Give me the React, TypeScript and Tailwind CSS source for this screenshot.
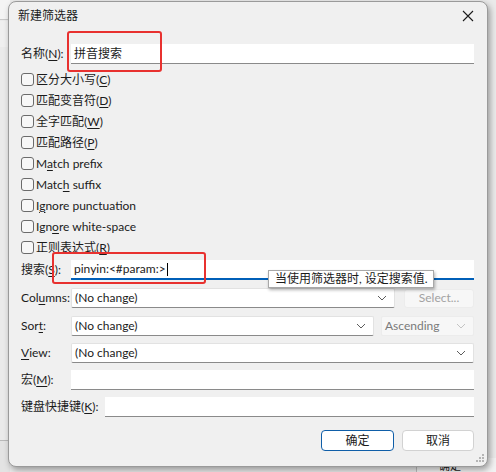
import React, { FC, ReactNode } from "react";

const font = "font-['Lato','Noto_Sans_CJK_SC',sans-serif]";

const U: FC<{ children: ReactNode }> = ({ children }) => (
  <span className="underline underline-offset-2 decoration-1">{children}</span>
);

const Chevron: FC<{ light?: boolean }> = ({ light }) => (
  <svg width="10" height="6" viewBox="0 0 10 6" className="shrink-0">
    <path
      d="M1 1 L5 5 L9 1"
      fill="none"
      stroke={light ? "#c4c4c4" : "#5c5c5c"}
      strokeWidth="1"
    />
  </svg>
);

const Check: FC<{ children: ReactNode }> = ({ children }) => (
  <label className="flex h-[21px] items-center gap-[2px] pl-[12px]">
    <span className="h-[13px] w-[13px] rounded-[3px] border border-[#6b6b6b] bg-[#f7f7f7]" />
    <span className="leading-none">{children}</span>
  </label>
);

const TextBox: FC<{ value?: ReactNode; className?: string; focused?: boolean }> = ({
  value,
  className = "",
  focused,
}) => (
  <div
    className={`flex h-[20px] items-center bg-white pl-[3px] border-b ${
      focused ? "border-b-2 border-[#005fb8]" : "border-[#8a8a8a]"
    } ${className}`}
  >
    {value}
  </div>
);

const Combo: FC<{ value: string; className?: string; disabled?: boolean }> = ({
  value,
  className = "",
  disabled,
}) => (
  <div
    className={`flex h-[20px] items-center justify-between rounded-[2px] border pl-[3px] pr-[7px] ${
      disabled
        ? "border-[#ececec] bg-[#f7f7f7] text-[#7a7a7a]"
        : "border-[#e2e2e2] border-b-[#8a8a8a] bg-white"
    } ${className}`}
  >
    <span>{value}</span>
    <Chevron light={disabled} />
  </div>
);

const Row: FC<{ label: ReactNode; children: ReactNode; mt: string; labelW?: string }> = ({
  label,
  children,
  mt,
  labelW = "w-[50px]",
}) => (
  <div className={`flex items-center pl-[12px] pr-[13px] ${mt}`}>
    <span className={`${labelW} shrink-0 whitespace-nowrap`}>{label}</span>
    <div className="flex flex-1 items-center">{children}</div>
  </div>
);

const App: FC = () => {
  return (
    <div className={`relative h-[472px] w-[496px] overflow-hidden bg-[#eaeaea] text-[12px] text-[#1b1b1b] ${font}`}>
      {/* desktop behind the dialog */}
      <div className="absolute left-0 top-0 h-[20px] w-[10px] border-b border-[#c9c9c9] bg-[#f4f4f4]" />
      <div className="absolute left-0 top-[21px] h-[26px] w-[10px] bg-[#efefef]" />
      <div className="absolute left-0 top-[440px] h-[32px] w-[10px] border-t border-[#b9b9b9] bg-[#e3e3e3]" />
      <div className="absolute left-[416px] top-[458px] h-[16px] w-[80px] border-l border-[#bdbdbd] bg-[#f2f2f2] pl-[22px] text-[11px] leading-[16px]">
        确定
      </div>

      {/* dialog window */}
      <div className="absolute left-[8px] top-[1px] flex h-[466px] w-[480px] flex-col rounded-[8px] border border-[#9a9a9a] bg-[#f0f0f0] shadow-[2px_3px_6px_rgba(0,0,0,0.35)]">
        <div className="flex h-[28px] items-center justify-between pl-[9px] pr-[13px]">
          <span>新建筛选器</span>
          <svg width="12" height="12" viewBox="0 0 12 12">
            <path d="M1 1 L11 11 M11 1 L1 11" stroke="#1b1b1b" strokeWidth="1.1" />
          </svg>
        </div>

        <Row label={<>名称(<U>N</U>):</>} mt="mt-[14px]">
          <TextBox value="拼音搜索" className="flex-1" />
        </Row>

        <div className="mt-[5px] flex flex-col">
          <Check>区分大小写(<U>C</U>)</Check>
          <Check>匹配变音符(<U>D</U>)</Check>
          <Check>全字匹配(<U>W</U>)</Check>
          <Check>匹配路径(<U>P</U>)</Check>
          <Check>M<U>a</U>tch prefix</Check>
          <Check>Matc<U>h</U> suffix</Check>
          <Check>I<U>g</U>nore punctuation</Check>
          <Check>Ign<U>o</U>re white-space</Check>
          <Check>正则表达式(<U>R</U>)</Check>
        </div>

        <Row label={<>搜索(<U>S</U>):</>} mt="mt-[2px]">
          <TextBox
            focused
            className="flex-1"
            value={
              <span className="flex items-center">
                pinyin:&lt;#param:&gt;<span className="ml-[1px] h-[13px] w-px bg-black" />
              </span>
            }
          />
        </Row>

        <Row label={<>Col<U>u</U>mns:</>} mt="mt-[8px]">
          <Combo value="(No change)" className="w-[324px]" />
          <div className="ml-[9px] flex h-[19px] flex-1 items-center justify-center rounded-[3px] border border-[#ececec] bg-[#f7f7f7] text-[#a2a2a2]">
            Select...
          </div>
        </Row>

        <Row label={<>Sor<U>t</U>:</>} mt="mt-[8px]">
          <Combo value="(No change)" className="w-[303px]" />
          <Combo value="Ascending" disabled className="ml-[7px] flex-1" />
        </Row>

        <Row label={<><U>V</U>iew:</>} mt="mt-[7px]">
          <Combo value="(No change)" className="flex-1" />
        </Row>

        <Row label={<>宏(<U>M</U>):</>} mt="mt-[7px]">
          <TextBox className="flex-1" />
        </Row>

        <Row label={<>键盘快捷键(<U>K</U>):</>} mt="mt-[7px]" labelW="w-[84px]">
          <TextBox className="flex-1" />
        </Row>

        <div className="mt-[13px] flex justify-end gap-[8px] pr-[13px]">
          <button className="flex h-[21px] w-[73px] items-center justify-center rounded-[4px] border border-[#0f5ea8] bg-white">
            确定
          </button>
          <button className="flex h-[21px] w-[72px] items-center justify-center rounded-[4px] border border-[#d2d2d2] bg-white">
            取消
          </button>
        </div>

        {/* size grip */}
        <svg width="8" height="8" viewBox="0 0 8 8" className="absolute bottom-[4px] right-[3px]">
          <rect x="6" y="0" width="2" height="2" fill="#b5b5b5" />
          <rect x="3" y="3" width="2" height="2" fill="#b5b5b5" />
          <rect x="6" y="3" width="2" height="2" fill="#b5b5b5" />
          <rect x="0" y="6" width="2" height="2" fill="#b5b5b5" />
          <rect x="3" y="6" width="2" height="2" fill="#b5b5b5" />
          <rect x="6" y="6" width="2" height="2" fill="#b5b5b5" />
        </svg>
      </div>

      {/* annotation boxes */}
      <div className="absolute left-[67px] top-[31px] h-[41px] w-[95px] rounded-[3px] border-2 border-[#e8312f]" />
      <div className="absolute left-[52px] top-[252px] h-[32px] w-[154px] rounded-[3px] border-2 border-[#e8312f]" />

      {/* tooltip */}
      <div className="absolute left-[268px] top-[270px] flex h-[18px] items-center border border-[#a8a8a8] bg-white pl-[6px] pr-[5px] shadow-[1px_2px_3px_rgba(0,0,0,0.3)]">
        当使用筛选器时, 设定搜索值.
      </div>
    </div>
  );
};

export default App;
